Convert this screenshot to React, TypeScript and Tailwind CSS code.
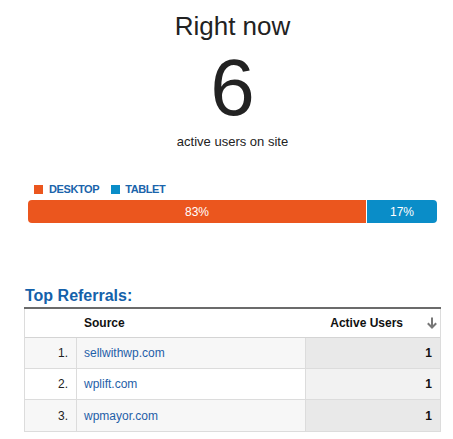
import React from "react";

const rows = [
  { n: "1.", src: "sellwithwp.com", v: "1" },
  { n: "2.", src: "wplift.com", v: "1" },
  { n: "3.", src: "wpmayor.com", v: "1" },
];

export default function App() {
  return (
    <div
      className="w-[453px] h-[439px] bg-white pl-[24px] pr-[12px] text-[#222]"
      style={{ fontFamily: '"Liberation Sans", Arial, sans-serif' }}
    >
      <div className="pt-[11px] text-center text-[26px] leading-[30px]">Right now</div>
      <div className="mt-[7px] text-center text-[80px] leading-[80px]">6</div>
      <div className="mt-[6px] text-center text-[13px] leading-[15px]">active users on site</div>

      <div className="mt-[34px] ml-[10px] flex items-center h-[12px] text-[11px] font-bold leading-[12px] tracking-[-0.4px] text-[#1a64ab]">
        <span className="w-[9px] h-[9px] bg-[#eb561e] mr-[6px]" />
        <span className="mr-[12px]">DESKTOP</span>
        <span className="w-[9px] h-[9px] bg-[#0a8dc8] mr-[5px]" />
        <span>TABLET</span>
      </div>

      <div className="mt-[5px] mx-[4px] flex h-[23px] rounded-[4px] overflow-hidden text-white text-[12px]">
        <div className="w-[338px] bg-[#eb561e] flex items-center justify-center">83%</div>
        <div className="w-[1px] bg-white" />
        <div className="flex-1 bg-[#0a8dc8] flex items-center justify-center">17%</div>
      </div>

      <div className="mt-[64px] pl-[1px] text-[16px] leading-[18px] font-bold text-[#1461aa]">Top Referrals:</div>
      <div className="mt-[2px] border-t-2 border-[#6b6b6b]">
        <div className="border-x border-b border-[#dcdcdc] text-[12px]">
          <div className="flex h-[29px] border-b border-[#d4d4d4] font-bold items-center text-[#111]">
            <div className="w-[52px]" />
            <div className="w-[229px] pl-[7px]">Source</div>
            <div className="flex-1 flex items-center justify-end pr-[2px]">
              <span>Active Users</span>
              <svg width="12" height="12" viewBox="0 0 12 12" className="ml-[23px]">
                <path d="M6 0.5V10.5M1.8 6.3L6 10.5L10.2 6.3" fill="none" stroke="#777" strokeWidth="2" />
              </svg>
            </div>
          </div>
          {rows.map((r, i) => (
            <div
              key={r.n}
              className={`flex h-[31px] ${i < rows.length - 1 ? "border-b border-[#dcdcdc]" : ""}`}
            >
              <div className={`w-[52px] border-r border-[#dcdcdc] flex items-center justify-end pr-[8px] ${i % 2 === 0 ? "bg-[#f7f7f7]" : "bg-white"}`}>
                {r.n}
              </div>
              <div className={`w-[229px] border-r border-[#dcdcdc] flex items-center pl-[7px] text-[#1f60a8] ${i % 2 === 0 ? "bg-[#f7f7f7]" : "bg-white"}`}>
                {r.src}
              </div>
              <div className={`flex-1 flex items-center justify-end pr-[8px] font-bold text-[#111] ${i % 2 === 0 ? "bg-[#e9e9e9]" : "bg-[#f2f2f2]"}`}>
                {r.v}
              </div>
            </div>
          ))}
        </div>
      </div>
    </div>
  );
}
